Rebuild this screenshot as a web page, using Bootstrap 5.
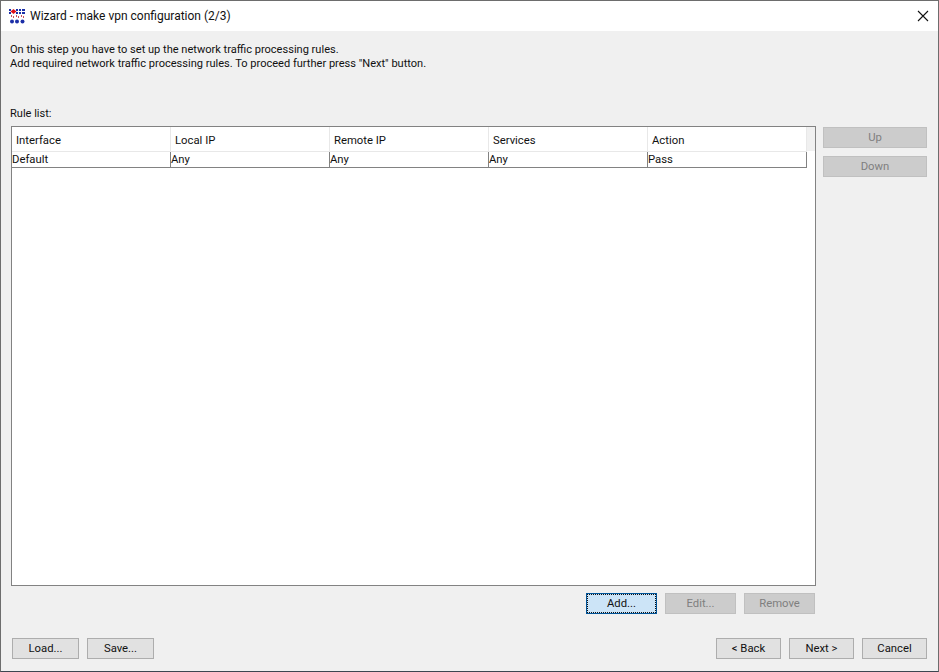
<!DOCTYPE html>
<html lang="en">

<head>
  <meta charset="UTF-8" />
  <title>Wizard - make vpn configuration (2/3)</title>
  <link href="https://cdn.jsdelivr.net/npm/bootstrap@5.3.0/dist/css/bootstrap.min.css" rel="stylesheet" />
  <style>
    html, body {
      height: 100%;
    }

    body {
      background: #f0f0f0;
      font-family: Roboto, "Open Sans", sans-serif;
      font-size: 11.05px;
      line-height: 14px;
      color: #111;
      overflow: hidden;
    }

    .wiz-window {
      width: 939px;
      height: 672px;
      border: 1px solid #6d6d6d;
      border-bottom-color: #3c4650;
    }

    .wiz-title {
      height: 30px;
      background: #fff;
      padding-left: 8px;
      font-size: 12px;
    }

    .wiz-close {
      width: 30px;
      height: 30px;
      border: 0;
      background: transparent;
      padding: 0;
    }

    .wiz-intro {
      padding: 12px 9px 0;
      height: 75px;
    }

    .wiz-label {
      padding: 1px 0 0 9px;
      height: 20px;
    }

    .wiz-main {
      padding-left: 10px;
      height: 460px;
    }

    .wiz-list {
      width: 805px;
      height: 460px;
      background: #fff;
      border: 1px solid #828282;
    }

    .wiz-table {
      width: 795px;
      table-layout: fixed;
      border-collapse: separate;
      border-spacing: 0;
      font-size: 11.3px;
    }

    .wiz-strip {
      background: linear-gradient(#f0f0f0 24px, #fff 24px);
    }

    .wiz-table th {
      height: 25px;
      background: #fff;
      font-weight: 400;
      padding: 3px 0 0 4px;
      border-right: 1px solid #e8e8e8;
      border-bottom: 1px solid #e8e8e8;
    }

    .wiz-table td {
      height: 16px;
      padding: 0;
      background: #fff;
      border-right: 1px solid #828282;
      border-bottom: 1px solid #828282;
    }

    .wiz-side {
      width: 104px;
      margin-left: 7px;
      padding-top: 1px;
      gap: 8px;
    }

    .wiz-btn {
      height: 21px;
      padding: 0;
      border: 1px solid #adadad;
      border-radius: 0;
      background: #e1e1e1;
      color: #111;
      font-size: 11.3px;
      line-height: 17px;
    }

    .wiz-btn:disabled {
      opacity: 1;
      background: #cccccc;
      border-color: #c0c0c0;
      color: #7f7f7f;
    }

    .wiz-focus {
      background: #cce4f7;
      border-color: #005499;
      outline: 1px dotted #111;
      outline-offset: -2px;
    }

    .wiz-actions {
      padding: 7px 0 0 585px;
      gap: 8px;
    }

    .wiz-footer {
      padding: 24px 11px 0;
    }
  </style>
</head>

<body class="m-0">
  <div class="wiz-window d-flex flex-column">
    <div class="wiz-title d-flex align-items-center">
      <svg width="17" height="15" viewBox="0 0 17 15" class="flex-shrink-0">
        <g fill="#1c2fa8">
          <rect x="0" y="0" width="2" height="2" />
          <rect x="0" y="3" width="2" height="2" />
          <rect x="7" y="0" width="2" height="2" />
          <rect x="7" y="3" width="2" height="2" />
          <rect x="10" y="0" width="2" height="2" />
          <rect x="10" y="3" width="2" height="2" />
          <rect x="13" y="0" width="3" height="2" />
          <rect x="13" y="3" width="3" height="2" />
          <circle cx="3" cy="12.5" r="2" />
          <circle cx="8" cy="12.5" r="2" />
          <circle cx="13.5" cy="12.5" r="2" />
        </g>
        <polygon points="4.5,0 7.5,2.5 4.5,5 1.5,2.5" fill="#e01018" />
        <g fill="#c8505a">
          <rect x="2" y="6" width="1" height="2" />
          <rect x="4" y="7" width="1" height="2" />
          <rect x="7" y="6" width="1" height="2" />
          <rect x="9" y="7" width="1" height="2" />
          <rect x="12" y="6" width="1" height="2" />
          <rect x="14" y="7" width="1" height="2" />
        </g>
      </svg>
      <span class="flex-grow-1 ms-1">Wizard - make vpn configuration (2/3)</span>
      <button class="wiz-close d-flex align-items-center justify-content-center" type="button" aria-label="Close">
        <svg width="12" height="12" viewBox="0 0 12 12">
          <path d="M1 1 L11 11 M11 1 L1 11" stroke="#111" stroke-width="1.1" fill="none" />
        </svg>
      </button>
    </div>

    <div class="wiz-intro">
      <div>On this step you have to set up the network traffic processing rules.</div>
      <div>Add required network traffic processing rules. To proceed further press "Next" button.</div>
    </div>

    <div class="wiz-label">Rule list:</div>

    <div class="wiz-main d-flex">
      <div class="wiz-list">
        <div class="wiz-strip">
          <table class="wiz-table">
            <colgroup>
              <col style="width: 159px" />
              <col style="width: 159px" />
              <col style="width: 159px" />
              <col style="width: 159px" />
              <col style="width: 159px" />
            </colgroup>
            <thead>
              <tr>
                <th>Interface</th>
                <th>Local IP</th>
                <th>Remote IP</th>
                <th>Services</th>
                <th>Action</th>
              </tr>
            </thead>
            <tbody>
              <tr>
                <td>Default</td>
                <td>Any</td>
                <td>Any</td>
                <td>Any</td>
                <td>Pass</td>
              </tr>
            </tbody>
          </table>
        </div>
      </div>
      <div class="wiz-side d-flex flex-column">
        <button class="btn wiz-btn" type="button" disabled>Up</button>
        <button class="btn wiz-btn" type="button" disabled>Down</button>
      </div>
    </div>

    <div class="wiz-actions d-flex">
      <button class="btn wiz-btn wiz-focus" style="width: 71px" type="button">Add...</button>
      <button class="btn wiz-btn" style="width: 71px" type="button" disabled>Edit...</button>
      <button class="btn wiz-btn" style="width: 71px" type="button" disabled>Remove</button>
    </div>

    <div class="wiz-footer d-flex justify-content-between">
      <div class="d-flex gap-2">
        <button class="btn wiz-btn" style="width: 67px" type="button">Load...</button>
        <button class="btn wiz-btn" style="width: 67px" type="button">Save...</button>
      </div>
      <div class="d-flex gap-2">
        <button class="btn wiz-btn" style="width: 65px" type="button">&lt; Back</button>
        <button class="btn wiz-btn" style="width: 65px" type="button">Next &gt;</button>
        <button class="btn wiz-btn" style="width: 65px" type="button">Cancel</button>
      </div>
    </div>
  </div>

  <script src="https://cdn.jsdelivr.net/npm/bootstrap@5.3.0/dist/js/bootstrap.bundle.min.js"></script>
</body>

</html>
